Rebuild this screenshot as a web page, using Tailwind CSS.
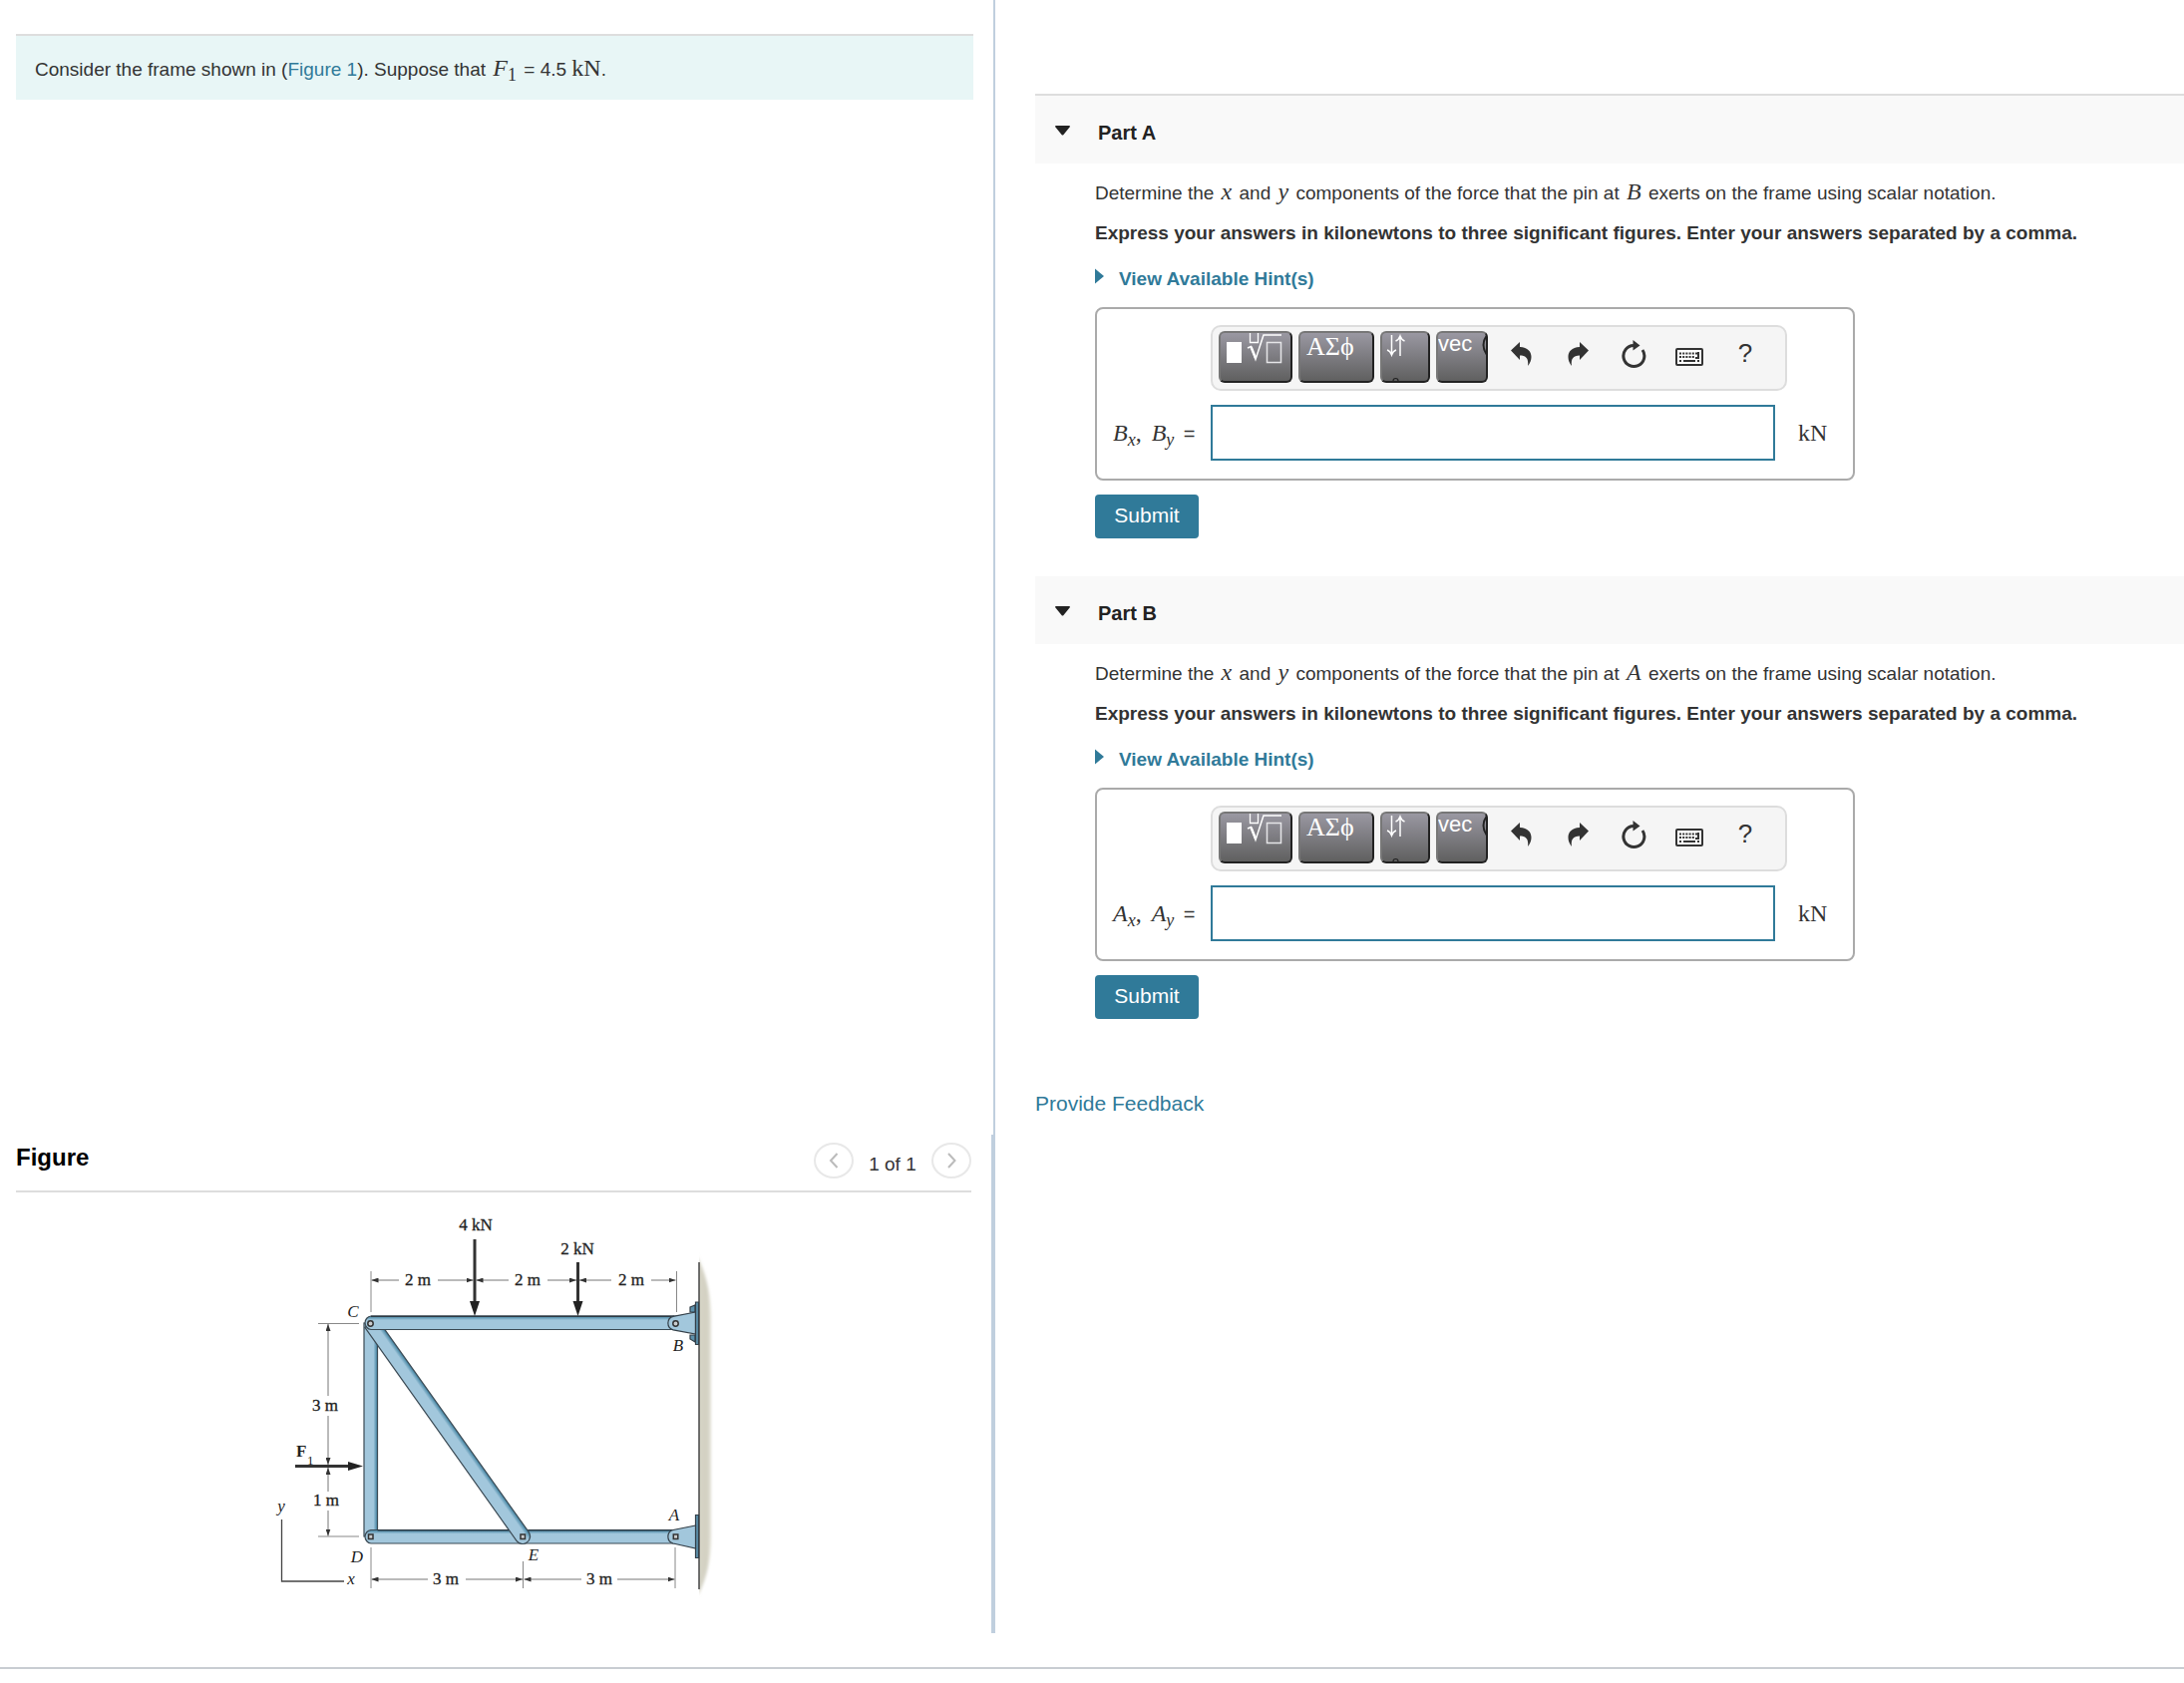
<!DOCTYPE html>
<html lang="en">

<head>
    <meta charset="UTF-8">
    <meta name="viewport" content="width=device-width, initial-scale=1.0">
    <title>Frame Problem</title>
    <script src="https://cdn.jsdelivr.net/npm/@tailwindcss/browser@4"></script>
</head>

<body class="min-h-screen flex flex-col bg-white text-[#333] text-[19px] font-['Liberation_Sans',Arial,sans-serif]">
    <!-- shared icons -->
    <svg class="hidden">
        <symbol id="i-template" viewBox="0 0 70 48">
            <rect x="6" y="9" width="15" height="21" fill="#fff" />
            <path d="M29.500 0v9.500h8V0" fill="none" stroke="#fff" stroke-width="1.300" />
            <path d="M27 15l3.500-1.500l4.500 13L43 2h18" fill="none" stroke="#fff" stroke-width="1.500" />
            <path d="M30.500 14l4.500 11" stroke="#fff" stroke-width="2.500" />
            <rect x="46.500" y="9.500" width="14" height="20" fill="none" stroke="#e5e5e8" stroke-width="1.500" />
        </symbol>
        <symbol id="i-updown" viewBox="0 0 46 48">
            <path d="M9.500 2v19M5 17q3 1 4.500 5q1.500-4 4.500-5M18 23V3M13.500 8q3-1 4.500-5q1.500 4 4.500 5" fill="none" stroke="#fff" stroke-width="1.500" />
            <circle cx="13.500" cy="48" r="2.500" fill="none" stroke="#222" stroke-width="1.200" />
        </symbol>
        <symbol id="i-undo" viewBox="0 0 24 26">
            <path d="M1 9.500L10 1v5c8 .5 11.500 4.500 11.500 10c0 3-1 6-3.500 9c1-7-1.500-10.500-8-10.500V19z" fill="#333" />
        </symbol>
        <symbol id="i-reset" viewBox="0 0 26 30">
            <path d="M13 6.500A10.500 10.500 0 1 0 22 11" fill="none" stroke="#333" stroke-width="3" />
            <path d="M12.500 1l7 5.500l-7 5z" fill="#333" />
        </symbol>
        <symbol id="i-keyboard" viewBox="0 0 28 18">
            <rect x="1" y="1" width="26" height="16" rx="1" fill="#fff" stroke="#333" stroke-width="2" />
            <path d="M4 5.500h18M4 9h16M4 13h2M22 13h2" stroke="#333" stroke-width="2" stroke-dasharray="2 1.200" />
            <path d="M8 13h12" stroke="#333" stroke-width="2" />
            <path d="M23 4v6h-3" fill="none" stroke="#333" stroke-width="2" />
        </symbol>
    </svg>

    <main class="flex-1 flex">
        <!-- left: problem text and figure -->
        <div class="w-[45.570%] flex flex-col">
            <section class="flex-1 border-r-2 border-[#c0cfde] pt-[34px] pl-4 pr-5">
                <p class="border-t-2 border-[#ddd] bg-[#e8f6f6] pl-[19px] pr-5 pt-5 pb-4 leading-7">
                    Consider the frame shown in (<a href="#figure" class="text-[#307a99]">Figure 1</a>). Suppose that
                    <span class="mx-0.5 font-['Liberation_Serif',serif] text-2xl leading-none"><i>F</i><sub>1</sub></span> = 4.5
                    <span class="font-['Liberation_Serif',serif] text-2xl leading-none">kN</span>.
                </p>
            </section>

            <section id="figure" class="h-[500px] border-r-4 border-[#c0cfde] pl-4 pr-5">
                <div class="h-[58px] border-b-2 border-[#ddd] flex justify-between">
                    <h2 class="text-2xl leading-[46px] font-bold text-black">Figure</h2>
                    <div class="flex items-start pt-2">
                        <button type="button" aria-label="Previous figure" class="w-10 h-9 rounded-[50%] border-2 border-[#e8e8e8] flex items-center justify-center">
                            <svg class="w-3 h-5" viewBox="0 0 12 20"><path d="M9.500 3L3 10l6.500 7" fill="none" stroke="#bbb" stroke-width="2" /></svg>
                        </button>
                        <span class="w-[78px] pt-1 text-center text-[19px] leading-9">1 of 1</span>
                        <button type="button" aria-label="Next figure" class="w-10 h-9 rounded-[50%] border-2 border-[#e8e8e8] flex items-center justify-center">
                            <svg class="w-3 h-5" viewBox="0 0 12 20"><path d="M3 3l6.500 7L3 17" fill="none" stroke="#bbb" stroke-width="2" /></svg>
                        </button>
                    </div>
                </div>

                <svg class="block mx-auto mt-3.5 w-[460px] h-[400px] font-['Liberation_Serif',serif] text-[17px]" viewBox="265 1210 460 400" fill="#222">
                    <defs>
                        <linearGradient id="wall" x1="0" x2="1" y1="0" y2="0">
                            <stop offset="0" stop-color="#d9d7ca" />
                            <stop offset="0.700" stop-color="#d2d0c1" />
                            <stop offset="1" stop-color="#e2e0d6" />
                        </linearGradient>
                        <linearGradient id="beamH" x1="0" x2="0" y1="0" y2="1">
                            <stop offset="0" stop-color="#3c7f9e" />
                            <stop offset="0.300" stop-color="#a2c7dc" />
                            <stop offset="1" stop-color="#a2c7dc" />
                        </linearGradient>
                        <linearGradient id="beamV" x1="1" x2="0" y1="0" y2="0">
                            <stop offset="0" stop-color="#3c7f9e" />
                            <stop offset="0.300" stop-color="#a2c7dc" />
                            <stop offset="1" stop-color="#a2c7dc" />
                        </linearGradient>
                        <filter id="soft" x="-50%" y="-5%" width="200%" height="110%"><feGaussianBlur stdDeviation="1.500" /></filter>
                        <clipPath id="wallSide"><rect x="701" y="1240" width="30" height="370" /></clipPath>
                        <marker id="dim" viewBox="0 0 7 5" refX="7" refY="2.500" markerWidth="7" markerHeight="5" markerUnits="userSpaceOnUse" orient="auto-start-reverse">
                            <path d="M0 0l7 2.500L0 5z" fill="#333" />
                        </marker>
                    </defs>

                    <!-- wall -->
                    <g clip-path="url(#wallSide)">
                        <path d="M698 1258Q713 1285 713 1325V1540Q713 1575 700 1600z" fill="url(#wall)" filter="url(#soft)" />
                    </g>
                    <path d="M701 1266V1594" stroke="#444" stroke-width="1.500" />

                    <!-- members -->
                    <g stroke="#3b4a54" stroke-width="1.200">
                        <rect x="365" y="1327" width="13.500" height="214" fill="url(#beamV)" />
                        <path d="M678 1534.500H372a6.800 6.800 0 0 0 0 13.500H678z" fill="url(#beamH)" />
                        <g transform="translate(372 1327) rotate(54.600)">
                            <path d="M0-7.500H262.500a7.500 7.500 0 0 1 0 15H0z" fill="url(#beamH)" />
                        </g>
                        <path d="M678 1320H372a6.800 6.800 0 0 0 0 13.500H678z" fill="url(#beamH)" />
                    </g>
                    <path d="M372 1320.300H676M378.500 1534.800H510M530 1534.800H676" stroke="#2c3a44" stroke-width="1.500" />

                    <!-- supports -->
                    <g fill="#a2c7dc" stroke="#333f48" stroke-width="1.200">
                        <path d="M692 1311l5-2v7h-5zM692 1339h5v7l-5-3z" fill="#5d91ac" />
                        <path d="M697.500 1316L675 1320.300a7 7 0 0 0 0 13.500L697.500 1338z" />
                        <path d="M697.500 1306H700.500V1348.500H697.500zM697.500 1519.500H700.500V1562.500H697.500z" fill="#5d91ac" />
                        <path d="M697.500 1530L675 1534.500a7 7 0 0 0 0 13.500L697.500 1553z" />
                    </g>
                    <g fill="#c9ccce" stroke="#333" stroke-width="1.500">
                        <circle cx="371.500" cy="1327.500" r="2.700" />
                        <circle cx="677.500" cy="1327.500" r="2.700" />
                        <rect x="369.500" y="1539" width="4.500" height="4.500" />
                        <rect x="522" y="1539" width="4.500" height="4.500" />
                        <rect x="675.300" y="1539" width="4.500" height="4.500" />
                    </g>

                    <!-- dimension ticks -->
                    <path d="M372 1275V1316M678.500 1275V1316M319 1327.500H360M319 1541H360M372 1552V1593M524.500 1566V1593M677 1552V1593" fill="none" stroke="#888" />
                    <path d="M282.500 1524V1586H345" fill="none" stroke="#444" stroke-width="1.300" />

                    <!-- dimension lines -->
                    <g fill="none" stroke="#777">
                        <path d="M400 1284H372.500" marker-end="url(#dim)" />
                        <path d="M439 1284H474.500" marker-end="url(#dim)" />
                        <path d="M510 1284H477.500" marker-end="url(#dim)" />
                        <path d="M549 1284H578" marker-end="url(#dim)" />
                        <path d="M613 1284H581" marker-end="url(#dim)" />
                        <path d="M653 1284H677.500" marker-end="url(#dim)" />
                        <path d="M329 1400V1328" marker-end="url(#dim)" />
                        <path d="M329 1420V1469" marker-end="url(#dim)" />
                        <path d="M329 1496V1472" marker-end="url(#dim)" />
                        <path d="M329 1515V1540.500" marker-end="url(#dim)" />
                        <path d="M429 1584H372.500" marker-end="url(#dim)" />
                        <path d="M467 1584H524" marker-end="url(#dim)" />
                        <path d="M583 1584H525.500" marker-end="url(#dim)" />
                        <path d="M619 1584H676.500" marker-end="url(#dim)" />
                    </g>

                    <!-- loads -->
                    <path d="M476 1243V1306M579.500 1266V1306M296 1470.500H350" stroke="#333" stroke-width="3" />
                    <path d="M471 1305h10l-5 15zM574.500 1305h10l-5 15zM349 1466v9l15-4.500z" />

                    <g text-anchor="middle" stroke="#222" stroke-width="0.300">
                        <text x="477" y="1234">4 kN</text>
                        <text x="579" y="1258">2 kN</text>
                        <text x="419" y="1289">2 m</text>
                        <text x="529" y="1289">2 m</text>
                        <text x="633" y="1289">2 m</text>
                        <text x="326" y="1415">3 m</text>
                        <text x="327" y="1510">1 m</text>
                        <text x="447" y="1589">3 m</text>
                        <text x="601" y="1589">3 m</text>
                    </g>
                    <text x="297" y="1461" class="font-bold">F</text>
                    <text x="308" y="1469" class="text-[13px]">1</text>
                    <g text-anchor="middle" class="italic">
                        <text x="354" y="1321">C</text>
                        <text x="680" y="1355">B</text>
                        <text x="676" y="1525">A</text>
                        <text x="358" y="1567">D</text>
                        <text x="535" y="1565">E</text>
                        <text x="282" y="1516">y</text>
                        <text x="352" y="1589">x</text>
                    </g>
                </svg>
            </section>
        </div>

        <!-- right: answer parts -->
        <div class="flex-1 min-w-0 pl-10 pt-[94px]">
            <section>
                <button type="button" class="w-full h-[70px] border-t-2 border-[#ddd] bg-[#f9f9f9] flex items-center pl-5 pt-0.5 text-left">
                    <svg class="w-[15px] h-2.5" viewBox="0 0 15 10"><path d="M0 1q0-1 1-1h13q1 0 1 1L8.500 9q-1 1-2 0z" fill="#222" /></svg>
                    <span class="pl-7 pt-1 text-xl font-bold text-[#222]">Part A</span>
                </button>
                <div class="pl-[60px] pt-2.5">
                    <p class="leading-10">Determine the <i class="mx-0.5 font-['Liberation_Serif',serif] text-2xl leading-none">x</i> and <i class="mx-0.5 font-['Liberation_Serif',serif] text-2xl leading-none">y</i> components of the force that the pin at <i class="mx-0.5 font-['Liberation_Serif',serif] text-2xl leading-none">B</i> exerts on the frame using scalar notation.</p>
                    <p class="leading-10 font-bold">Express your answers in kilonewtons to three significant figures. Enter your answers separated by a comma.</p>
                    <button type="button" class="mt-1.5 flex items-center leading-10 font-bold text-[#307a99]">
                        <svg class="w-2.5 h-4 mb-1.5" viewBox="0 0 10 16"><path d="M0 0.500L9 8L0 15.500z" fill="#307a99" /></svg>
                        <span class="pl-3.5">View Available Hint(s)</span>
                    </button>
                    <div class="mt-2 w-[762px] max-w-full border-2 border-[#aaa] rounded-lg pt-4 pb-[18px] pl-4">
                        <div class="ml-[98px] w-[578px] h-[66px] border-2 border-[#ddd] rounded-[10px] bg-[#f5f5f5] flex pl-1.5 pt-1">
                            <div class="flex gap-1.5 mr-1.5">
                                <button type="button" aria-label="Templates" class="w-[74px] h-[52px] overflow-hidden rounded-md border-2 border-t-[#777] border-l-[#777] border-b-[#222] border-r-[#222] bg-linear-to-b from-[#9a98a2] to-[#606060]"><svg class="w-[70px] h-12"><use href="#i-template" /></svg></button>
                                <button type="button" class="w-[76px] h-[52px] overflow-hidden rounded-md border-2 border-t-[#777] border-l-[#777] border-b-[#222] border-r-[#222] bg-linear-to-b from-[#9a98a2] to-[#606060] flex items-start pl-1.5 font-['Liberation_Serif',serif] text-[26px] leading-7 text-white">ΑΣϕ</button>
                                <button type="button" aria-label="Arrows" class="w-[50px] h-[52px] overflow-hidden rounded-md border-2 border-t-[#777] border-l-[#777] border-b-[#222] border-r-[#222] bg-linear-to-b from-[#9a98a2] to-[#606060]"><svg class="w-[46px] h-12"><use href="#i-updown" /></svg></button>
                                <button type="button" class="w-[52px] h-[52px] overflow-hidden rounded-md border-2 border-t-[#777] border-l-[#777] border-b-[#222] border-r-[#222] bg-linear-to-b from-[#9a98a2] to-[#606060] flex items-start text-[22px] leading-[22px] text-white">vec<svg class="ml-auto shrink-0 w-1 h-6" viewBox="0 0 4 24"><path d="M5 2Q-2 12 5 22" fill="none" stroke="#222" stroke-width="2" /></svg></button>
                            </div>
                            <button type="button" aria-label="Undo" class="w-14 h-[46px] flex items-center justify-center"><svg class="w-6 h-[26px]"><use href="#i-undo" /></svg></button>
                            <button type="button" aria-label="Redo" class="w-14 h-[46px] flex items-center justify-center"><svg class="w-6 h-[26px] -scale-x-100"><use href="#i-undo" /></svg></button>
                            <button type="button" aria-label="Reset" class="w-14 h-[46px] flex items-center justify-center"><svg class="w-[26px] h-[30px]"><use href="#i-reset" /></svg></button>
                            <button type="button" aria-label="Keyboard" class="w-14 h-[46px] pt-1.5 flex items-center justify-center"><svg class="w-7 h-[18px]"><use href="#i-keyboard" /></svg></button>
                            <button type="button" aria-label="Help" class="w-14 h-[46px] pb-0.5 text-[26px] leading-none">?</button>
                        </div>
                        <div class="mt-3.5 flex items-center">
                            <label for="answerA" class="w-[98px] text-xl"><span class="mr-1 font-['Liberation_Serif',serif] text-2xl"><i>B<sub>x</sub></i>, <i class="ml-1">B<sub>y</sub></i></span> =</label>
                            <input type="text" id="answerA" name="answerA" class="w-[566px] h-14 border-2 border-[#307a99] bg-white px-2">
                            <span class="pl-[23px] font-['Liberation_Serif',serif] text-2xl">kN</span>
                        </div>
                    </div>
                    <button type="submit" class="mt-3.5 w-[104px] h-11 pb-0.5 rounded-sm bg-[#307a99] text-[21px] text-white">Submit</button>
                </div>
            </section>

            <section class="mt-[38px]">
                <button type="button" class="w-full h-[68px] bg-[#f9f9f9] flex items-center pl-5 pt-0.5 text-left">
                    <svg class="w-[15px] h-2.5" viewBox="0 0 15 10"><path d="M0 1q0-1 1-1h13q1 0 1 1L8.500 9q-1 1-2 0z" fill="#222" /></svg>
                    <span class="pl-7 pt-1 text-xl font-bold text-[#222]">Part B</span>
                </button>
                <div class="pl-[60px] pt-2.5">
                    <p class="leading-10">Determine the <i class="mx-0.5 font-['Liberation_Serif',serif] text-2xl leading-none">x</i> and <i class="mx-0.5 font-['Liberation_Serif',serif] text-2xl leading-none">y</i> components of the force that the pin at <i class="mx-0.5 font-['Liberation_Serif',serif] text-2xl leading-none">A</i> exerts on the frame using scalar notation.</p>
                    <p class="leading-10 font-bold">Express your answers in kilonewtons to three significant figures. Enter your answers separated by a comma.</p>
                    <button type="button" class="mt-1.5 flex items-center leading-10 font-bold text-[#307a99]">
                        <svg class="w-2.5 h-4 mb-1.5" viewBox="0 0 10 16"><path d="M0 0.500L9 8L0 15.500z" fill="#307a99" /></svg>
                        <span class="pl-3.5">View Available Hint(s)</span>
                    </button>
                    <div class="mt-2 w-[762px] max-w-full border-2 border-[#aaa] rounded-lg pt-4 pb-[18px] pl-4">
                        <div class="ml-[98px] w-[578px] h-[66px] border-2 border-[#ddd] rounded-[10px] bg-[#f5f5f5] flex pl-1.5 pt-1">
                            <div class="flex gap-1.5 mr-1.5">
                                <button type="button" aria-label="Templates" class="w-[74px] h-[52px] overflow-hidden rounded-md border-2 border-t-[#777] border-l-[#777] border-b-[#222] border-r-[#222] bg-linear-to-b from-[#9a98a2] to-[#606060]"><svg class="w-[70px] h-12"><use href="#i-template" /></svg></button>
                                <button type="button" class="w-[76px] h-[52px] overflow-hidden rounded-md border-2 border-t-[#777] border-l-[#777] border-b-[#222] border-r-[#222] bg-linear-to-b from-[#9a98a2] to-[#606060] flex items-start pl-1.5 font-['Liberation_Serif',serif] text-[26px] leading-7 text-white">ΑΣϕ</button>
                                <button type="button" aria-label="Arrows" class="w-[50px] h-[52px] overflow-hidden rounded-md border-2 border-t-[#777] border-l-[#777] border-b-[#222] border-r-[#222] bg-linear-to-b from-[#9a98a2] to-[#606060]"><svg class="w-[46px] h-12"><use href="#i-updown" /></svg></button>
                                <button type="button" class="w-[52px] h-[52px] overflow-hidden rounded-md border-2 border-t-[#777] border-l-[#777] border-b-[#222] border-r-[#222] bg-linear-to-b from-[#9a98a2] to-[#606060] flex items-start text-[22px] leading-[22px] text-white">vec<svg class="ml-auto shrink-0 w-1 h-6" viewBox="0 0 4 24"><path d="M5 2Q-2 12 5 22" fill="none" stroke="#222" stroke-width="2" /></svg></button>
                            </div>
                            <button type="button" aria-label="Undo" class="w-14 h-[46px] flex items-center justify-center"><svg class="w-6 h-[26px]"><use href="#i-undo" /></svg></button>
                            <button type="button" aria-label="Redo" class="w-14 h-[46px] flex items-center justify-center"><svg class="w-6 h-[26px] -scale-x-100"><use href="#i-undo" /></svg></button>
                            <button type="button" aria-label="Reset" class="w-14 h-[46px] flex items-center justify-center"><svg class="w-[26px] h-[30px]"><use href="#i-reset" /></svg></button>
                            <button type="button" aria-label="Keyboard" class="w-14 h-[46px] pt-1.5 flex items-center justify-center"><svg class="w-7 h-[18px]"><use href="#i-keyboard" /></svg></button>
                            <button type="button" aria-label="Help" class="w-14 h-[46px] pb-0.5 text-[26px] leading-none">?</button>
                        </div>
                        <div class="mt-3.5 flex items-center">
                            <label for="answerB" class="w-[98px] text-xl"><span class="mr-1 font-['Liberation_Serif',serif] text-2xl"><i>A<sub>x</sub></i>, <i class="ml-1">A<sub>y</sub></i></span> =</label>
                            <input type="text" id="answerB" name="answerB" class="w-[566px] h-14 border-2 border-[#307a99] bg-white px-2">
                            <span class="pl-[23px] font-['Liberation_Serif',serif] text-2xl">kN</span>
                        </div>
                    </div>
                    <button type="submit" class="mt-3.5 w-[104px] h-11 pb-0.5 rounded-sm bg-[#307a99] text-[21px] text-white">Submit</button>
                </div>
            </section>

            <a href="#feedback" class="inline-block mt-[71px] text-[21px] leading-7 text-[#307a99]">Provide Feedback</a>
        </div>
    </main>

    <footer class="mt-[34px] h-4 border-t-2 border-[#c8cdd2]"></footer>
</body>

</html>
